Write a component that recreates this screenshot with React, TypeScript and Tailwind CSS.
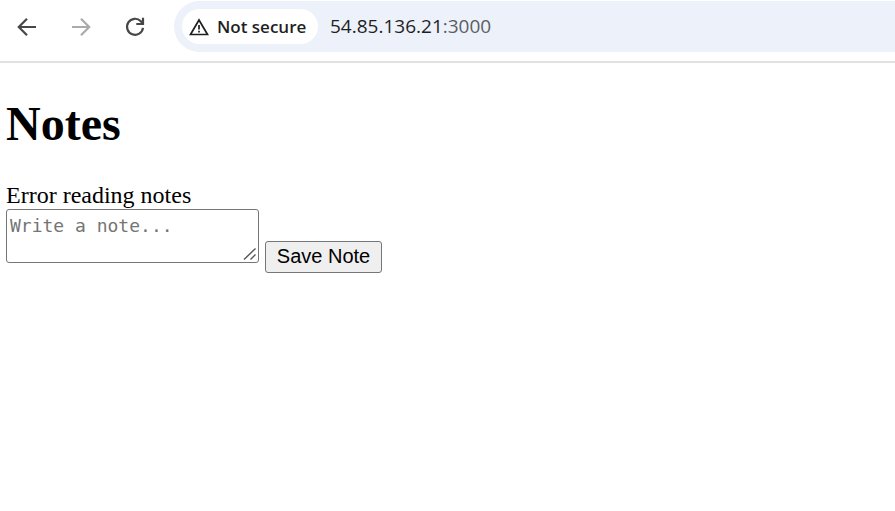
import type { ReactNode } from "react";

function NavButton({ label, disabled, children }: { label: string; disabled?: boolean; children: ReactNode }) {
  return (
    <button
      type="button"
      aria-label={label}
      disabled={disabled}
      className="flex size-8 items-center justify-center text-[#474747] disabled:text-[#ababab]"
    >
      <svg viewBox="0 0 20 20" className="size-5" fill="none" stroke="currentColor" strokeWidth="2.2" aria-hidden="true">
        {children}
      </svg>
    </button>
  );
}

function Toolbar() {
  return (
    <header className="flex h-[63px] border-b-2 border-[#e1e1e1] bg-white pt-px">
      <nav className="flex h-[51px] items-center gap-[22px] pr-[23px] pl-[11px]">
        <NavButton label="Back">
          <path d="M19 10H2.500M10 1.800 1.800 10l8.200 8.200" />
        </NavButton>
        <NavButton label="Forward" disabled>
          <path d="M1 10h16.500M10 1.800 18.200 10 10 18.200" />
        </NavButton>
        <NavButton label="Reload">
          <path d="M18 10.800A8 8 0 1 1 15.800 4.200L18 6.500M18 .8v6.200h-6.700" />
        </NavButton>
      </nav>
      <div className="flex h-[51px] min-w-0 flex-1 items-center rounded-l-full bg-[#ecf1fa] pl-2 font-['Open_Sans',sans-serif]">
        <button
          type="button"
          className="flex h-[35px] w-[136px] shrink-0 items-center gap-2 rounded-full bg-white pl-[7px] text-[17px] font-semibold text-[#1f1f1f]"
        >
          <svg viewBox="0 0 20 18" className="h-[18px] w-5 shrink-0" fill="none" stroke="currentColor" aria-hidden="true">
            <path d="M10 2 18.500 16.500h-17z" strokeWidth="1.700" />
            <path d="M10 7v4.500M10 12.700v1.800" strokeWidth="1.700" />
          </svg>
          <span className="whitespace-nowrap">Not secure</span>
        </button>
        <p className="pl-3 text-[19px] text-[#1f1f1f]">
          54.85.136.21<span className="text-[#5b5e63]">:3000</span>
        </p>
      </div>
    </header>
  );
}

export default function App() {
  return (
    <div className="min-h-screen bg-white">
      <Toolbar />
      <main className="px-1.5 pt-[33px] font-['Liberation_Serif',serif] text-black">
        <h1 className="text-[48px] leading-[55px] font-bold">Notes</h1>
        <p className="pt-[31px] text-2xl leading-[27px]">Error reading notes</p>
        <form className="flex items-start gap-1.5" onSubmit={(event) => event.preventDefault()}>
          <div className="relative h-[54px] w-[253px]">
            <textarea
              aria-label="Note"
              placeholder="Write a note..."
              className="block size-full resize-none rounded-[3px] border border-[#767676] bg-white px-[3px] py-1 font-['DejaVu_Sans_Mono',monospace] text-[18px] leading-[23px] placeholder:text-[#757575]"
            />
            <svg
              viewBox="0 0 14 14"
              className="pointer-events-none absolute right-0.5 bottom-0.5 size-[14px]"
              fill="none"
              stroke="#555555"
              strokeWidth="1.4"
              aria-hidden="true"
            >
              <path d="M1 12.500 12.500 1.500M7.500 12.500l5-5" />
            </svg>
          </div>
          <button
            type="submit"
            className="mt-8 h-8 w-[117px] rounded-[3px] border border-[#767676] bg-[#efefef] pb-0.5 font-['Liberation_Sans',sans-serif] text-xl leading-6 whitespace-nowrap"
          >
            Save Note
          </button>
        </form>
      </main>
    </div>
  );
}
